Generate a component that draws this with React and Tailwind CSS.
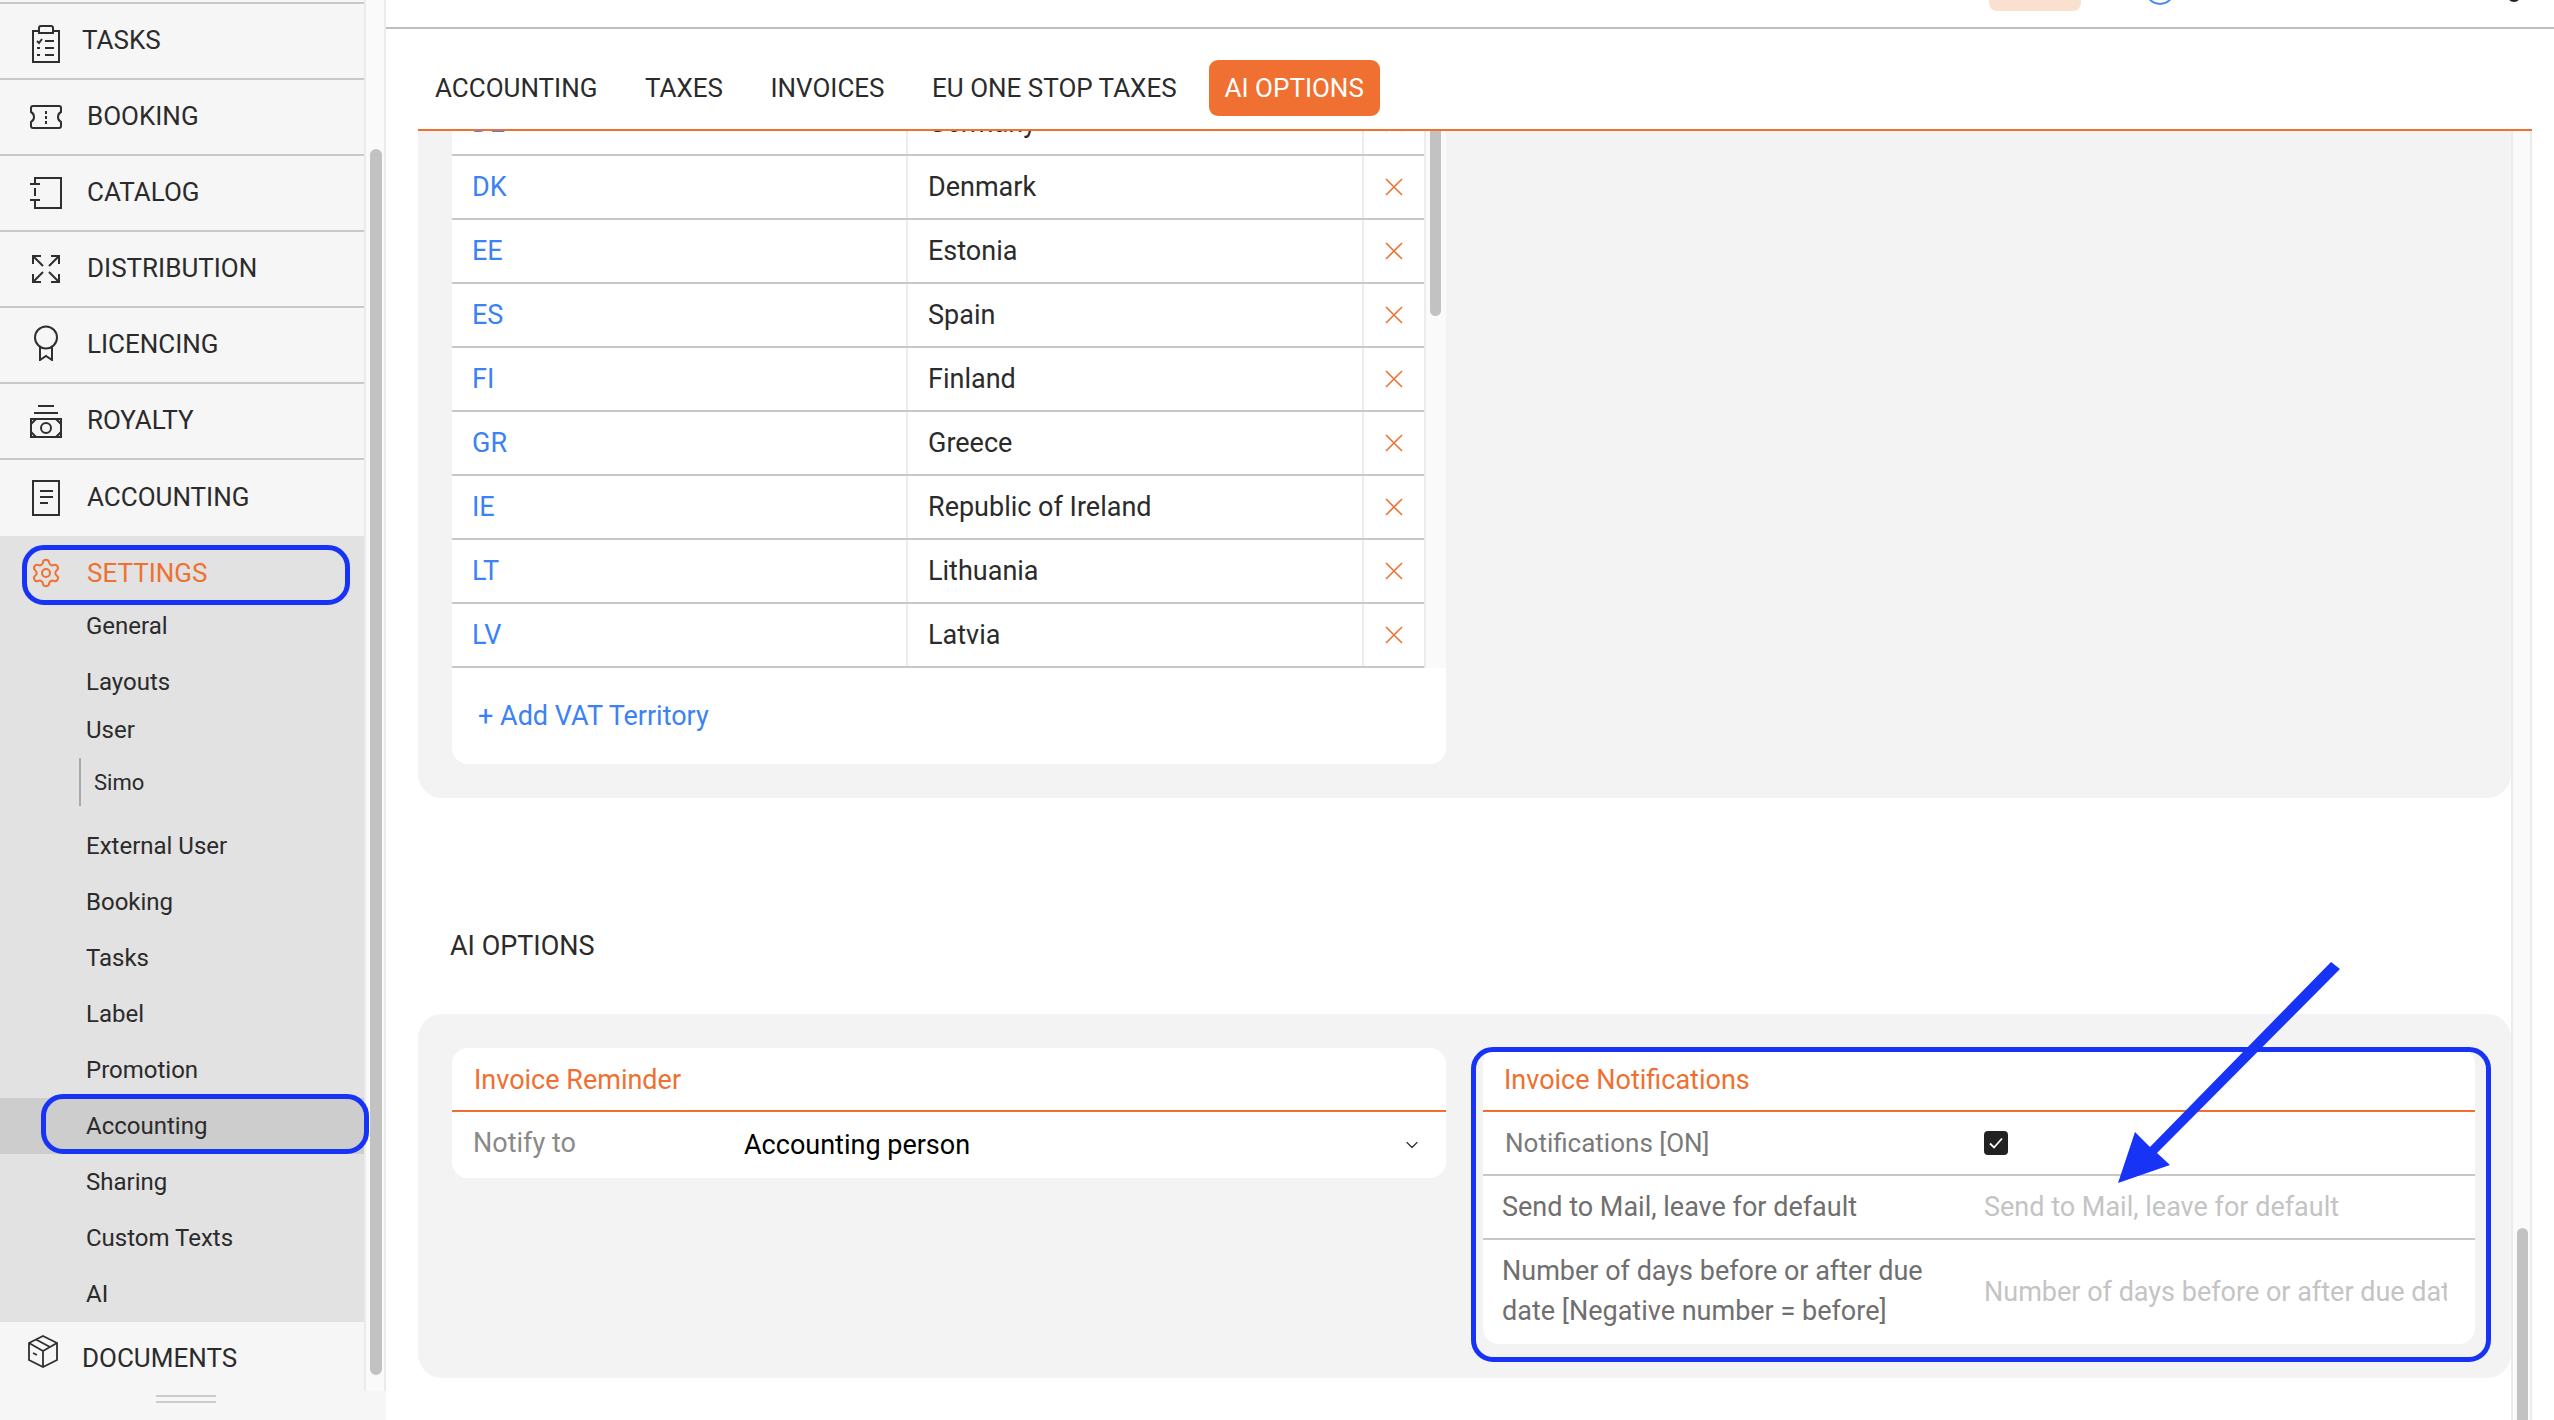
import React from "react";
import { Settings, ChevronDown } from "lucide-react";

const strokeProps = { fill: "none", stroke: "#2f2f2f", strokeWidth: 2 };

function TasksIcon() {
  return (
    <svg width="30" height="38" viewBox="0 0 30 38" className="ml-[1px] translate-y-[3px]" {...strokeProps}>
      <path d="M8 6H2v31h26V6h-6M8 8V3q0-2 2-2h10q2 0 2 2v5z" />
      <path d="M6 16l2 2 3-4M14 16h9M6 23h3M14 23h9M6 30h3M14 30h9" />
    </svg>
  );
}

function BookingIcon() {
  return (
    <svg width="32" height="24" viewBox="0 0 32 24" {...strokeProps}>
      <path d="M3 1h26c1.2 0 2 .8 2 2v4c-2 1-3 3-3 5s1 4 3 5v4c0 1.2-.8 2-2 2H3c-1.200 0-2-.8-2-2v-4c2-1 3-3 3-5s-1-4-3-5V3c0-1.200.8-2 2-2z" />
      <path d="M16 6v3M16 11v3M16 16v3" />
    </svg>
  );
}

function CatalogIcon() {
  return (
    <svg width="32" height="32" viewBox="0 0 32 32" {...strokeProps}>
      <path d="M5 7V1h26v30H5v-8M0 7h10M0 23h10M5 11v8" />
    </svg>
  );
}

function DistributionIcon() {
  return (
    <svg width="28" height="28" viewBox="0 0 28 28" className="ml-[2px]" {...strokeProps}>
      <path d="M1 9V1h8M1 1l10 10M19 1h8v8M27 1L17 11M1 19v8h8M1 27l10-10M27 19v8h-8M27 27L17 17" />
    </svg>
  );
}

function LicencingIcon() {
  return (
    <svg width="24" height="36" viewBox="0 0 24 36" className="ml-[4px] -translate-y-[2px]" {...strokeProps}>
      <circle cx="12" cy="12.500" r="11" />
      <path d="M6 22v13l6-4 6 4V22" />
    </svg>
  );
}

function RoyaltyIcon() {
  return (
    <svg width="32" height="33" viewBox="0 0 32 33" {...strokeProps}>
      <path d="M8 1h16M4 8h24" />
      <rect x="1" y="14" width="30" height="18" />
      <circle cx="16" cy="23" r="5" />
      <path d="M1 19l5-5M26 14l5 5M1 27l5 5M26 32l5-5" />
    </svg>
  );
}

function AccountingIcon() {
  return (
    <svg width="28" height="36" viewBox="0 0 28 36" className="ml-[2px]" {...strokeProps}>
      <rect x="1" y="1" width="26" height="34" />
      <path d="M8 11h13M8 17h13M8 23h8" />
    </svg>
  );
}

function DocumentsIcon() {
  return (
    <svg width="30" height="33" viewBox="0 0 30 33" fill="none" stroke="#2f2f2f" strokeWidth="1.8">
      <path d="M15 1l14 7v17l-14 7-14-7V8z" />
      <path d="M1 8l14 8 14-8M15 16v16M8 4.500l14 7.500M5 18l4 2" />
    </svg>
  );
}

function RemoveIcon() {
  return (
    <svg width="18" height="18" viewBox="0 0 18 18" fill="none" stroke="#ef7030" strokeWidth="1.600">
      <path d="M1 1l16 16M17 1L1 17" />
    </svg>
  );
}

const topRows = [
  { label: "TASKS", icon: <TasksIcon />, left: "w-[52px]" },
  { label: "BOOKING", icon: <BookingIcon />, left: "w-[57px]" },
  { label: "CATALOG", icon: <CatalogIcon />, left: "w-[57px]" },
  { label: "DISTRIBUTION", icon: <DistributionIcon />, left: "w-[57px]" },
  { label: "LICENCING", icon: <LicencingIcon />, left: "w-[57px]" },
  { label: "ROYALTY", icon: <RoyaltyIcon />, left: "w-[57px]" },
  { label: "ACCOUNTING", icon: <AccountingIcon />, left: "w-[57px]" },
];

const afterSimo = ["External User", "Booking", "Tasks", "Label", "Promotion"];
const lastItems = ["Sharing", "Custom Texts", "AI"];

const territories = [
  ["DE", "Germany"],
  ["DK", "Denmark"],
  ["EE", "Estonia"],
  ["ES", "Spain"],
  ["FI", "Finland"],
  ["GR", "Greece"],
  ["IE", "Republic of Ireland"],
  ["LT", "Lithuania"],
  ["LV", "Latvia"],
];

function Sidebar() {
  return (
    <div className="w-[386px] shrink-0 flex flex-col bg-[#f6f6f6] text-[#2b2b2b]">
      <div className="h-[1391px] flex">
        <div className="w-[364px] shrink-0">
          <div className="mt-[2px] border-t-2 border-[#c8c8c8]">
            {topRows.map((row, i) => (
              <div
                key={row.label}
                className={`h-[76px] box-border flex items-center ${
                  i < topRows.length - 1 ? "border-b-2 border-[#c8c8c8]" : ""
                }`}
              >
                <div className="w-[30px] shrink-0" />
                <div className={`${row.left} shrink-0`}>{row.icon}</div>
                <span className="text-[26px] leading-none -translate-y-[1px]">{row.label}</span>
              </div>
            ))}
          </div>

          {/* settings block */}
          <div className="h-[786px] bg-[#e2e2e2] text-[24px]">
            <div className="relative h-[62px] pt-[11px] flex items-center pl-[30px]">
              <div className="w-[57px] shrink-0">
                <Settings size={32} strokeWidth={1.5} color="#ef7030" />
              </div>
              <span className="text-[26px] leading-none text-[#ef7030]">SETTINGS</span>
              <div className="absolute left-[22px] top-[9px] w-[328px] h-[60px] border-[5px] border-[#1733f5] rounded-[22px]" />
            </div>
            <div className="h-[56px] flex items-center pl-[86px]">General</div>
            <div className="h-[56px] flex items-center pl-[86px]">Layouts</div>
            <div className="h-[40px] flex items-center pl-[86px]">User</div>
            <div className="pl-[79px] pt-[8px] pb-[12px]">
              <div className="h-[48px] border-l-2 border-[#a8a8a8] pl-[13px] flex items-center text-[22px]">Simo</div>
            </div>
            {afterSimo.map((item) => (
              <div key={item} className="h-[56px] flex items-center pl-[86px]">
                {item}
              </div>
            ))}
            <div className="relative h-[56px] flex items-center pl-[86px] bg-[#cdcdcd]">
              Accounting
              <div className="absolute left-[41px] -top-[4px] w-[328px] h-[60px] border-[5px] border-[#1733f5] rounded-[22px] z-10" />
            </div>
            {lastItems.map((item) => (
              <div key={item} className="h-[56px] flex items-center pl-[86px]">
                {item}
              </div>
            ))}
          </div>

          <div className="h-[71px] pt-[1px] flex items-center pl-[28px]">
            <div className="w-[54px] shrink-0 -translate-y-[7px]">
              <DocumentsIcon />
            </div>
            <span className="text-[26px] leading-none">DOCUMENTS</span>
          </div>
        </div>

        {/* sidebar scrollbar */}
        <div className="w-[22px] shrink-0 bg-[#fafafa] border-l-2 border-r-2 border-[#ebebeb] pl-[4px] pt-[149px]">
          <div className="w-[12px] h-[1226px] rounded-full bg-[#c2c2c2]" />
        </div>
      </div>
      <div className="flex-1 flex flex-col items-center gap-[4px] pt-[4px] pr-[14px]">
        <div className="w-[60px] h-[2px] bg-[#cccccc]" />
        <div className="w-[60px] h-[2px] bg-[#cccccc]" />
      </div>
    </div>
  );
}

function TopBar() {
  return (
    <div className="h-[29px] border-b-2 border-[#bfbfbf] flex items-start overflow-hidden">
      <div className="ml-[1603px] w-[92px] h-[11px] rounded-b-[8px] bg-[#fae0cf]" />
      <div className="ml-[64px] -mt-[25px] w-[30px] h-[30px] rounded-full border-2 border-[#4a8cf0]" />
      <div className="ml-[332px] -mt-[12px] w-[14px] h-[14px] rounded-full bg-[#222222]" />
    </div>
  );
}

function Tabs() {
  return (
    <div className="ml-[32px] w-[2114px] h-[102px] box-border border-b-2 border-[#ef7030] pl-[17px] pt-[31px] flex items-start text-[#2b2b2b] text-[26px]">
      <div className="flex gap-[47.5px] h-[56px] items-center">
        <span>ACCOUNTING</span>
        <span>TAXES</span>
        <span>INVOICES</span>
        <span>EU ONE STOP TAXES</span>
      </div>
      <div className="ml-[32px] h-[56px] px-[16px] flex items-center rounded-[9px] bg-[#ef7030] text-white">AI OPTIONS</div>
    </div>
  );
}

function TerritoryCard() {
  return (
    <div className="w-[994px] bg-white rounded-b-[16px] overflow-hidden">
      <div className="h-[537px] flex">
        <div className="w-[974px] shrink-0 overflow-hidden border-r-2 border-[#ececec]">
          <div className="-mt-[39px]">
            {territories.map(([code, name]) => (
              <div key={code} className="h-[64px] box-border border-b-2 border-[#c8c8c8] flex items-center text-[27px]">
                <div className="w-[456px] h-full pl-[20px] flex items-center text-[#3b82f6] border-r-2 border-[#ececec]">{code}</div>
                <div className="w-[456px] h-full pl-[20px] flex items-center text-[#2b2b2b] border-r-2 border-[#ececec]">{name}</div>
                <div className="flex-1 flex justify-center">
                  <RemoveIcon />
                </div>
              </div>
            ))}
          </div>
        </div>
        <div className="flex-1 bg-[#fafafa] pl-[4px]">
          <div className="w-[11px] h-[185px] rounded-b-full bg-[#c2c2c2]" />
        </div>
      </div>
      <div className="h-[96px] flex items-center pl-[26px] text-[27px] text-[#3b82f6]">+ Add VAT Territory</div>
    </div>
  );
}

function InvoiceReminder() {
  return (
    <div className="w-[994px] h-[130px] shrink-0 bg-white rounded-[16px] text-[27px]">
      <div className="h-[64px] box-border border-b-2 border-[#ef7030] pl-[22px] pt-[2px] flex items-center text-[#ef7030]">Invoice Reminder</div>
      <div className="h-[66px] flex items-center pl-[21px] pr-[24px]">
        <span className="w-[271px] shrink-0 text-[#8a8a8a] -translate-y-[2px]">Notify to</span>
        <span className="flex-1 text-black">Accounting person</span>
        <ChevronDown size={20} strokeWidth={1.5} color="#333333" />
      </div>
    </div>
  );
}

function InvoiceNotifications() {
  return (
    <div className="relative ml-[37px] w-[992px] h-[296px] shrink-0 bg-white rounded-[16px] text-[27px] text-[#6f6f6f]">
      <div className="h-[64px] box-border border-b-2 border-[#ef7030] pl-[21px] pt-[2px] flex items-center text-[#ef7030]">Invoice Notifications</div>
      <div className="h-[64px] box-border border-b-2 border-[#c8c8c8] pl-[22px] flex items-center">
        <span className="w-[479px] shrink-0 text-[26px] text-[#7a7a7a]">Notifications [ON]</span>
        <div className="w-[24px] h-[24px] rounded-[4px] bg-[#222222] flex items-center justify-center">
          <svg width="16" height="16" viewBox="0 0 16 16" fill="none" stroke="white" strokeWidth="1.800">
            <path d="M2 8.500l4 4 8-9" />
          </svg>
        </div>
      </div>
      <div className="h-[64px] box-border border-b-2 border-[#c8c8c8] pl-[19px] flex items-center">
        <span className="w-[482px] shrink-0">Send to Mail, leave for default</span>
        <input className="w-[463px] outline-none placeholder:text-[#c4c4c4]" placeholder="Send to Mail, leave for default" />
      </div>
      <div className="h-[104px] pl-[19px] flex items-center">
        <span className="w-[482px] shrink-0 pr-[14px] pb-[3px] leading-[40px]">Number of days before or after due date [Negative number = before]</span>
        <input className="w-[463px] outline-none placeholder:text-[#c4c4c4]" placeholder="Number of days before or after due date" />
      </div>
      <div className="absolute -left-[12px] -top-[1px] -right-[16px] -bottom-[18px] border-[5px] border-[#1733f5] rounded-[22px] pointer-events-none" />
    </div>
  );
}

function Main() {
  return (
    <div className="flex-1 min-w-0 flex flex-col bg-white overflow-hidden">
      <TopBar />
      <Tabs />
      <div className="flex-1 min-h-0 flex ml-[32px] w-[2114px]">
        <div className="w-[2093px] shrink-0">
          <div className="bg-[#f3f3f3] rounded-b-[24px] pl-[34px] pb-[34px]">
            <TerritoryCard />
          </div>
          <div className="h-[216px] pl-[32px] pt-[131px] text-[27px] leading-[34px] text-[#2b2b2b]">AI OPTIONS</div>
          <div className="h-[364px] bg-[#f3f3f3] rounded-[24px] p-[34px] flex items-start">
            <InvoiceReminder />
            <InvoiceNotifications />
          </div>
        </div>
        <div className="flex-1 bg-[#fafafa] border-l-2 border-r-2 border-[#ebebeb] pl-[4px] pt-[1097px]">
          <div className="w-[11px] h-[200px] rounded-t-full bg-[#c2c2c2]" />
        </div>
      </div>
    </div>
  );
}

export default function App() {
  return (
    <div className="relative w-[2554px] h-[1420px] flex overflow-hidden bg-white font-[family-name:Roboto,sans-serif]">
      <Sidebar />
      <Main />
      {/* annotation arrow */}
      <svg className="absolute left-[2100px] top-[950px] w-[250px] h-[250px]" viewBox="2100 950 250 250">
        <polygon points="2331,962 2340,969 2157,1153 2170,1165 2118,1183 2135,1132 2150,1147" fill="#1733f5" />
      </svg>
    </div>
  );
}
